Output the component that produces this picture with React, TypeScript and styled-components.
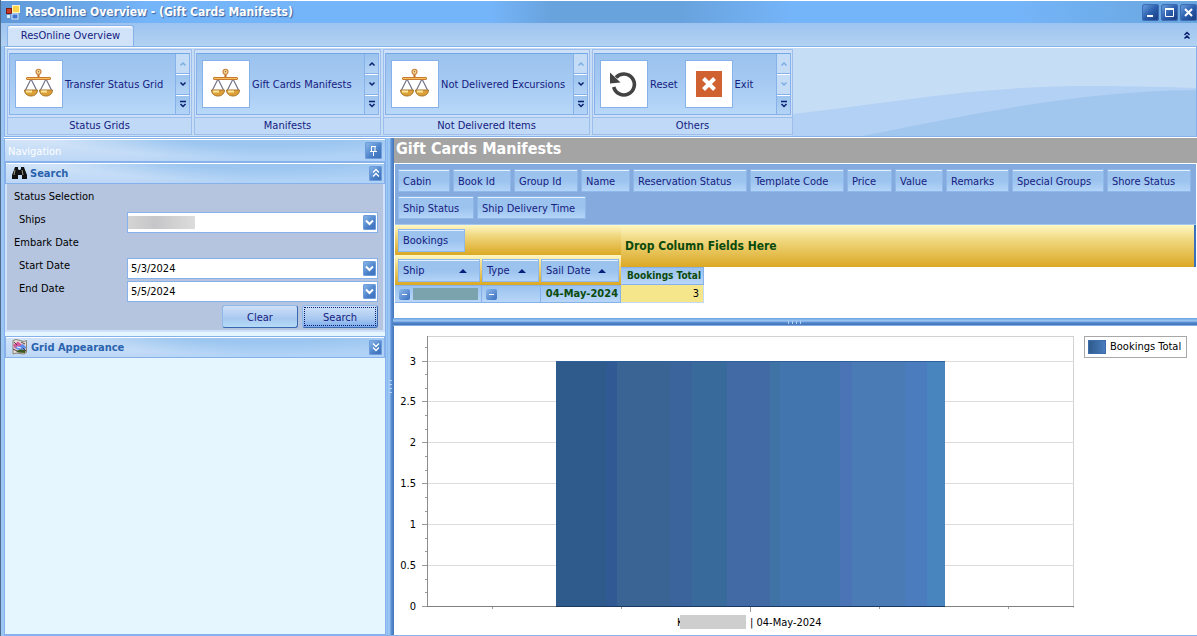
import React, { useId, useState } from "react";
import styled, { createGlobalStyle, css } from "styled-components";

const INK = "#15207f";
const LINE = "#86b1ea";

const GlobalStyle = createGlobalStyle`
  *, *::before, *::after { box-sizing: border-box; }
  html, body, #root { height: 100%; }
  body {
    margin: 0;
    font: 11px/14px "DejaVu Sans Condensed", "DejaVu Sans", sans-serif;
    color: #000;
    background: #fff;
  }
  button, input, select { font: inherit; color: inherit; margin: 0; }
  button { padding: 0; border: 0; background: none; cursor: pointer; }
  h1, h2 { margin: 0; }
`;

const Window = styled.div`
  min-height: 100%;
  display: flex;
  flex-direction: column;
  border-left: 1px solid #4f6b8c;
  background: #9cc6f4;
  overflow: hidden;
`;

/* ---------- title bar ---------- */

const TitleBar = styled.header`
  height: 23px;
  display: flex;
  align-items: center;
  gap: 4px;
  padding-left: 5px;
  border-top: 1px solid #fff;
  background: linear-gradient(90deg, #5f98d8 0, #6aa5e4 6%, #74b4f8 12%, #74b4f8 41%, #69a3de 46%, #69a3de 57%, #74b4f8 66%, #74b4f8 85%, #69a6de 100%);
`;

const WindowTitle = styled.h1`
  flex: 1;
  font-size: 12px;
  line-height: 20px;
  color: #fff;
  text-shadow: 1px 1px 1px #3a62a0;
`;

const WindowButtons = styled.div`
  display: flex;
  gap: 2px;
`;

const WindowButton = styled.button`
  width: 17px;
  height: 17px;
  display: grid;
  place-items: center;
  border-radius: 3px;
  background: linear-gradient(135deg, #6fa6e4, #2c5fae 50%, #16367c);
  box-shadow: inset 0 0 0 1px #3d6cb4;
`;

/* ---------- ribbon ---------- */

const TabStrip = styled.nav`
  height: 23px;
  display: flex;
  align-items: flex-end;
  justify-content: space-between;
  padding-left: 6px;
  background: linear-gradient(#9dc3f0, #b2d2f2);
`;

const Tab = styled.button`
  height: 21px;
  width: 127px;
  color: ${INK};
  border: 1px solid ${LINE};
  border-bottom: 0;
  border-radius: 3px 3px 0 0;
  background: linear-gradient(#fff 0, #cfe2f8 3px, #d2e3f8);
`;

const CollapseButton = styled.button`
  width: 20px;
  height: 22px;
  display: grid;
  place-items: center;
  color: #0a1f6e;
`;

const RibbonBody = styled.div`
  position: relative;
  height: 91px;
  display: flex;
  gap: 2px;
  margin-left: 3px;
  padding: 2px;
  border: 1px solid ${LINE};
  box-shadow: inset 0 1px #fff;
  background: #c6ddf6;
`;

const RibbonWave = styled.svg`
  position: absolute;
  right: 0;
  top: 1px;
  width: 404px;
  height: 88px;
`;

const Group = styled.section<{ $width: number }>`
  position: relative;
  width: ${(p) => p.$width}px;
  height: 86px;
  display: flex;
  flex-direction: column;
  border: 1px solid #9dbdec;
  background: #cde0f8;
`;

const Gallery = styled.div`
  height: 65px;
  display: flex;
  margin: 3px 1px 2px;
  border: 1px solid ${LINE};
  border-top-color: #6fa8e8;
  background: linear-gradient(#9bc3ee, #a6caf2 50%, #b8d8f8);
`;

const GalleryItems = styled.div`
  flex: 1;
  display: flex;
  gap: 7px;
  padding: 6px 0 0 5px;
`;

const GalleryItem = styled.button`
  height: 48px;
  display: flex;
  align-items: center;
  gap: 2px;
  color: ${INK};
  white-space: nowrap;
`;

const ItemLabel = styled.span`
  padding-top: 2px;
`;

const IconTile = styled.span`
  width: 48px;
  height: 48px;
  display: grid;
  place-items: center;
  border: 1px solid ${LINE};
  background: #fff;
`;

const GalleryScroll = styled.div`
  width: 14px;
  display: flex;
  flex-direction: column;
  border-left: 1px solid ${LINE};
`;

const ScrollButton = styled.button`
  flex: 1;
  display: grid;
  place-items: center;
  color: #0a1f6e;
  background: linear-gradient(#9bc3ee, #b4d4f6);
  & + & { border-top: 1px solid ${LINE}; box-shadow: inset 0 1px #fff; }
  &:disabled { color: #7cace4; background: #c4dcf6; }
`;

const GroupCaption = styled.div`
  flex: 1;
  border-top: 1px solid #9dbdec;
  background: #bfd9f6;
  color: ${INK};
  text-align: center;
  line-height: 16px;
`;

/* ---------- side panel ---------- */

const Main = styled.main`
  flex: 1;
  display: flex;
  margin-left: 3px;
  border-top: 1px solid #fff;
  border-bottom: 1px solid ${LINE};
`;

const SidePanel = styled.aside`
  width: 382px;
  flex: none;
  display: flex;
  flex-direction: column;
  border: 1px solid ${LINE};
  background: #e6f6ff;
`;

const barFill = css`
  background:
    radial-gradient(ellipse 240px 24px at 68% -4px, #9cc6f0 40%, transparent 90%),
    linear-gradient(90deg, transparent 35%, #b0d2f6 65%),
    linear-gradient(#d2e4f8, #bcd7f6);
`;

const NavHeader = styled.div`
  height: 23px;
  display: flex;
  align-items: center;
  justify-content: space-between;
  padding: 0 3px;
  border-top: 1px solid #fff;
  border-bottom: 1px solid ${LINE};
  color: #fff;
  ${barFill}
  & > span { padding-top: 2px; }
`;

const SectionHeader = styled.h2`
  height: 22px;
  display: flex;
  align-items: center;
  gap: 3px;
  padding: 0 2px 0 6px;
  border: 1px solid ${LINE};
  box-shadow: inset 0 1px #fff;
  font-size: 11px;
  color: #2a62ae;
  ${barFill}
  & > span { flex: 1; padding-top: 2px; }
`;

const NavSection = styled.section`
  margin-bottom: 4px;
`;

const SmallButton = styled.button<{ $size?: number }>`
  width: ${(p) => p.$size ?? 13}px;
  height: ${(p) => (p.$size ? 17 : 15)}px;
  flex: none;
  display: grid;
  place-items: center;
  border-radius: 2px;
  background: linear-gradient(135deg, #8fbcec, #4a80c8 60%, #3a6cb8);
  box-shadow: inset 0 0 0 1px #6d9cdc;
`;

const Form = styled.form`
  padding: 3px 5px 2px 7px;
  border: 2px solid #cfe2fa;
  border-top: 0;
  background: #b5c5df;
`;

const FormHeading = styled.div`
  height: 23px;
  line-height: 20px;
`;

const FieldRow = styled.div`
  height: 23px;
  display: grid;
  grid-template-columns: 108px 1fr;
  padding-left: 5px;
  line-height: 20px;
`;

const FieldBox = styled.div`
  height: 21px;
  margin-top: 2px;
  display: flex;
  align-items: center;
  padding-right: 1px;
  border: 1px solid ${LINE};
  background: #fff;
`;

const TextInput = styled.input`
  flex: 1;
  min-width: 0;
  height: 19px;
  padding: 0 3px;
  border: 0;
  outline: 0;
  background: transparent;
`;

const ShipSelect = styled.select`
  flex: 1;
  min-width: 0;
  height: 19px;
  border: 0;
  outline: 0;
  appearance: none;
  background: transparent;
`;

const Masked = styled.span<{ $tone: "grey" | "teal" }>`
  display: inline-block;
  width: ${(p) => (p.$tone === "teal" ? 65 : 67)}px;
  height: ${(p) => (p.$tone === "teal" ? 12 : 13)}px;
  background: ${(p) => (p.$tone === "teal" ? "#7ba3ae" : "linear-gradient(90deg, #d4d4d4, #c6c6c8 40%, #dcdcdc)")};
`;

const FormActions = styled.div`
  display: flex;
  justify-content: flex-end;
  gap: 4px;
  margin-top: 3px;
`;

const PushButton = styled.button<{ $focused?: boolean }>`
  width: 76px;
  height: 23px;
  padding: 1px;
  color: ${INK};
  border: 1px solid;
  border-color: #8fb8ea #3a68b0 #3a68b0 #8fb8ea;
  border-radius: 3px;
  background: linear-gradient(#cfe1f8, #a8c8f0 60%, ${(p) => (p.$focused ? "#7cacec" : "#b6dcf8")});
  & > span {
    display: block;
    height: 19px;
    line-height: ${(p) => (p.$focused ? 19 : 21)}px;
    ${(p) => p.$focused && "border: 1px dotted #0a1f6e;"}
  }
`;

/* ---------- work area ---------- */

const SplitterV = styled.div`
  width: 7px;
  flex: none;
  margin-left: 1px;
  display: grid;
  place-items: center;
  background: linear-gradient(90deg, #7fb4f0, #a8d0f8 30%, #5c90d4 60%, #4474b8);
`;

const SplitterH = styled(SplitterV)`
  width: auto;
  height: 8px;
  margin: 0 0 0 -1px;
  background: linear-gradient(#6aa0e0, #9cc6f4 35%, #4f84cc 60%, #4474b8 80%, #9cc6f4);
`;

const Grip = styled.span<{ $vertical?: boolean }>`
  width: ${(p) => (p.$vertical ? 3 : 14)}px;
  height: ${(p) => (p.$vertical ? 14 : 3)}px;
  background: repeating-linear-gradient(${(p) => (p.$vertical ? "180deg" : "90deg")}, #b4d6fa 0 1px, transparent 1px 4px);
`;

const Work = styled.section`
  flex: 1;
  min-width: 0;
  display: flex;
  flex-direction: column;
  background: #fff;
`;

const WorkTitle = styled.h2`
  height: 25px;
  padding-left: 2px;
  font-size: 16px;
  line-height: 21px;
  color: #fff;
  background: #a4a4a4;
`;

const FieldArea = styled.div`
  min-height: 61px;
  display: flex;
  flex-wrap: wrap;
  align-content: flex-start;
  gap: 4px 3px;
  margin: 1px 1px 0;
  padding: 4px 2px 3px 3px;
  border-top: 1px solid #78a8e4;
  border-bottom: 1px solid #a4c8f0;
  background: #85abde;
`;

const Chip = styled.button<{ $width: number }>`
  width: ${(p) => p.$width}px;
  height: 23px;
  display: flex;
  align-items: center;
  justify-content: space-between;
  padding: 2px 12px 0 4px;
  border: 1px solid #8fb8ea;
  box-shadow: inset 0 1px #e4f0fc;
  color: ${INK};
  font-weight: normal;
  white-space: nowrap;
  background: linear-gradient(#9bc3ee 50%, #b4d4f8);
`;

const gold = "linear-gradient(#fff8c4, #f0d880 35%, #dba824)";

const Pivot = styled.table`
  width: calc(100% - 2px);
  margin-left: 1px;
  table-layout: fixed;
  border-collapse: separate;
  border-spacing: 0;
  th, td { padding: 0; text-align: left; }
`;

const PivotRow = styled.tr<{ $height: number }>`
  height: ${(p) => p.$height}px;
`;

const GoldCell = styled.th`
  vertical-align: middle;
  background: ${gold};
`;

const ChipRow = styled.div`
  display: flex;
  gap: 2px;
  padding-left: 3px;
`;

const DropHint = styled.th`
  color: #0b4a0b;
  font-size: 12px;
  vertical-align: middle;
  border-right: 2px solid #3c70bc;
  background: ${gold};
  & > span { padding-left: 4px; }
`;

const HeadCell = styled.th`
  border: 1px solid ${LINE};
  border-width: 1px 1px 1px 0;
  color: #0b4a0b;
  background: linear-gradient(#9bc3ee, #b8d6f8);
  line-height: 14px;
  white-space: nowrap;
  && { text-align: right; padding-right: 2px; }
`;

const TotalHead = styled(HeadCell)`
  font-size: 10px;
`;

const RowHeader = styled(HeadCell)`
  && { text-align: left; padding-left: 4px; }
`;

const RowHeaderContent = styled.span`
  display: flex;
  align-items: center;
  gap: 3px;
`;

const ValueCell = styled.td`
  border-bottom: 1px solid #c4daf4;
  border-right: 1px solid #c4daf4;
  background: #f5e68c;
  && { text-align: right; padding-right: 4px; }
`;

const Expander = styled.button`
  width: 11px;
  height: 11px;
  flex: none;
  display: grid;
  place-items: center;
  border-radius: 2px;
  background: linear-gradient(135deg, #8cb8ec, #3c70c0);
`;

const GridSpace = styled.div`
  height: 15px;
`;

const ChartArea = styled.div`
  flex: 1;
  display: flex;
  align-items: flex-start;
  gap: 10px;
  padding-right: 10px;
`;

const ChartSvg = styled.svg`
  flex: 1;
  min-width: 0;
  display: block;
`;

const Legend = styled.div`
  flex: none;
  width: 103px;
  height: 22px;
  margin-top: 10px;
  display: flex;
  align-items: center;
  gap: 4px;
  padding: 0 3px;
  border: 1px solid #a8a8a8;
  line-height: 20px;
  white-space: nowrap;
`;

const Swatch = styled.span`
  width: 18px;
  height: 14px;
  background: linear-gradient(90deg, #2f5b8c, #4a7cbe);
  border: 1px solid #3c6cac;
`;

/* ---------- drawings ---------- */

const AppIcon = () => (
  <svg width="15" height="15" viewBox="0 0 15 15" aria-hidden="true">
    <rect x="0.5" y="3.5" width="5" height="5" fill="#c63a26" stroke="#7c1c10" />
    <rect x="6.5" y="0.5" width="7" height="7" fill="#fbd24c" stroke="#fff6c8" />
    <rect x="6" y="9" width="6" height="5" fill="#3f74d0" stroke="#dce8fa" />
    <rect x="1" y="10" width="3" height="3" fill="#e4ecf8" />
  </svg>
);

const ScalesIcon = () => (
  <svg width="32" height="32" viewBox="0 0 32 32" fill="none" aria-hidden="true">
    <path d="M8 11 2.500 22M8 11l5.500 11M23 11l-5.500 11M23 11l5.500 11" stroke="#74748c" strokeWidth="1.2" />
    <path d="M15.500 6v4" stroke="#c46a1e" strokeWidth="2" />
    <circle cx="15.500" cy="3.800" r="2.500" fill="#fbe6a0" stroke="#c88444" strokeWidth="1.200" />
    <circle cx="15.500" cy="3.800" r="0.800" fill="#a85a24" />
    <rect x="3.500" y="9.500" width="24" height="2" rx="0.500" fill="#f8c060" stroke="#c87a2c" />
    <path d="M1.500 22h13c0 3.500-2.500 6-6.500 6s-6.500-2.500-6.500-6ZM16.500 22h13c0 3.500-2.500 6-6.500 6s-6.500-2.500-6.500-6Z" fill="#dca038" stroke="#a8742c" />
    <path d="M3 23.500h6M18 23.500h6" stroke="#fbe89c" strokeWidth="2" />
  </svg>
);

const ResetIcon = () => (
  <svg width="32" height="32" viewBox="0 0 32 32" fill="none" aria-hidden="true">
    <path d="M8 9.500A10.500 10.500 0 1 1 5.700 19" stroke="#434343" strokeWidth="3.600" />
    <path d="M2 4.500v11l10.500-1Z" fill="#434343" />
  </svg>
);

const ExitIcon = () => (
  <svg width="26" height="26" viewBox="0 0 26 26" aria-hidden="true">
    <rect width="26" height="26" fill="#cf6230" />
    <path d="m7.500 7.500 11 11m0-11-11 11" stroke="#fff" strokeWidth="4" />
  </svg>
);

const BinocularsIcon = () => (
  <svg width="15" height="13" viewBox="0 0 15 13" aria-hidden="true">
    <path d="M3 0h3v2l1 1h1l1-1V0h3l1 3 2 5v4h-5V8H6v4H0V8l2-5Z" fill="#111" />
    <path d="M3 3 2 8M10 3l1 5" stroke="#999a78" />
  </svg>
);

const AppearanceIcon = () => (
  <svg width="16" height="16" viewBox="0 0 16 16" aria-hidden="true">
    <path d="M1 1.500 4 .5l8 2 2.500-1v12L12 15l-8-1-3 1Z" fill="#e4e0d8" stroke="#8a8478" />
    <path d="m1 6 5-3.500 5 4-2 2.500-6 .5Z" fill="#d85a9c" />
    <path d="m3 8 5-1 3-2 3 3-1 3-8-.5Z" fill="#5c8cec" />
    <path d="m4 12 4-1.500 6 .5-1 3-7-.5Z" fill="#3d5a24" />
    <path d="m2 3 3 3M1 10l4 2M9 3l4 2M11 9l3 3" stroke="#5a3a44" />
    <path d="m5 8 4 1" stroke="#fff" />
  </svg>
);

const Chevron = ({ up = false, double = false, barred = false }: { up?: boolean; double?: boolean; barred?: boolean }) => (
  <svg width="8" height="8" viewBox="0 0 8 8" fill="none" stroke="currentColor" strokeWidth="1.500" aria-hidden="true">
    {double ? (
      <path d={up ? "m1.500 4 2.500-2.500L6.500 4m-5 3.500L4 5l2.500 2.500" : "M1.500.5 4 3 6.500.5m-5 3.500L4 6.500 6.500 4"} />
    ) : (
      <path d={up ? "M1.500 5.500 4 3l2.500 2.500" : barred ? "M1 1.500h6M1.500 4 4 6.500 6.500 4" : "M1.500 2.500 4 5l2.500-2.500"} />
    )}
  </svg>
);

const SectionChevron = ({ up = false }: { up?: boolean }) => (
  <svg width="8" height="10" viewBox="0 0 8 10" fill="none" stroke="#fff" strokeWidth="1.300" aria-hidden="true">
    <path d={up ? "m1 4.500 3-3 3 3m-6 4 3-3 3 3" : "m1 1.500 3 3 3-3m-6 4 3 3 3-3"} />
  </svg>
);

const DropArrow = () => (
  <svg width="9" height="7" viewBox="0 0 9 7" fill="none" stroke="#fff" strokeWidth="2" aria-hidden="true">
    <path d="m1 1.500 3.500 3.500L8 1.500" />
  </svg>
);

const SortArrow = () => (
  <svg width="8" height="4" viewBox="0 0 8 4" aria-hidden="true">
    <path d="M0 4 4 0l4 4Z" fill="#0a1f7c" />
  </svg>
);

const MinusIcon = () => (
  <svg width="7" height="7" viewBox="0 0 7 7" aria-hidden="true">
    <path d="M1 3.500h5" stroke="#fff" />
  </svg>
);

/* ---------- composed parts ---------- */

interface GroupData {
  caption: string;
  width: number;
  up: boolean;
  down: boolean;
  items: { label: string; icon: React.ReactNode }[];
}

const groups: GroupData[] = [
  { caption: "Status Grids", width: 185, up: false, down: true, items: [{ label: "Transfer Status Grid", icon: <ScalesIcon /> }] },
  { caption: "Manifests", width: 187, up: true, down: true, items: [{ label: "Gift Cards Manifests", icon: <ScalesIcon /> }] },
  { caption: "Not Delivered Items", width: 207, up: false, down: true, items: [{ label: "Not Delivered Excursions", icon: <ScalesIcon /> }] },
  {
    caption: "Others", width: 201, up: false, down: false,
    items: [{ label: "Reset", icon: <ResetIcon /> }, { label: "Exit", icon: <ExitIcon /> }],
  },
];

const RibbonGroup = ({ caption, width, up, down, items }: GroupData) => (
  <Group $width={width} aria-label={caption}>
    <Gallery>
      <GalleryItems>
        {items.map((item) => (
          <GalleryItem key={item.label}>
            <IconTile>{item.icon}</IconTile>
            <ItemLabel>{item.label}</ItemLabel>
          </GalleryItem>
        ))}
      </GalleryItems>
      <GalleryScroll>
        <ScrollButton disabled={!up} aria-label="Scroll up"><Chevron up /></ScrollButton>
        <ScrollButton disabled={!down} aria-label="Scroll down"><Chevron /></ScrollButton>
        <ScrollButton aria-label="Show all"><Chevron barred /></ScrollButton>
      </GalleryScroll>
    </Gallery>
    <GroupCaption>{caption}</GroupCaption>
  </Group>
);

const DateField = ({ label, initial }: { label: string; initial: string }) => {
  const id = useId();
  const [value, setValue] = useState(initial);
  return (
    <FieldRow>
      <label htmlFor={id}>{label}</label>
      <FieldBox>
        <TextInput id={id} value={value} onChange={(e) => setValue(e.target.value)} />
        <SmallButton type="button" aria-label={`Open ${label}`}><DropArrow /></SmallButton>
      </FieldBox>
    </FieldRow>
  );
};

const fields: [string, number][] = [
  ["Cabin", 52], ["Book Id", 58], ["Group Id", 64], ["Name", 49], ["Reservation Status", 114],
  ["Template Code", 94], ["Price", 45], ["Value", 48], ["Remarks", 63], ["Special Groups", 92],
  ["Shore Status", 84], ["Ship Status", 76], ["Ship Delivery Time", 109],
];

const rowFields: [string, number][] = [["Ship", 82], ["Type", 57], ["Sail Date", 78]];

const barBands: [number, number, string][] = [
  [162, 50, "#2f5b8c"], [212, 11, "#315a94"], [223, 53, "#3a6494"], [276, 22, "#3b649c"],
  [298, 35, "#386b9c"], [333, 43, "#426ba6"], [376, 10, "#4073a5"], [386, 60, "#4274ae"],
  [446, 12, "#4a74b5"], [458, 53, "#4a7bb5"], [511, 22, "#4a7cbe"], [533, 18, "#4884bd"],
];

const yTicks = [
  ["3", 35], ["2.5", 75], ["2", 116], ["1.5", 157], ["1", 198], ["0.5", 239], ["0", 280],
] as const;

const minorTicks = [21, 48, 62, 89, 103, 130, 144, 171, 185, 212, 225, 253, 266];

const BookingsChart = () => (
  <ChartSvg viewBox="0 0 680 308" role="img" aria-label="Bookings Total by ship and sail date">
    <g shapeRendering="crispEdges">
      <path d="M33 10h647M679 10v271" stroke="#d2d2d2" fill="none" transform="translate(0 .5)" />
      {yTicks.map(([label, y]) => (
        <React.Fragment key={label}>
          <rect x="34" y={y} width="646" height="1" fill="#dcdcdc" />
          <rect x="28" y={y} width="5" height="1" fill="#9a9a9a" />
        </React.Fragment>
      ))}
      {minorTicks.map((y) => <rect key={y} x="31" y={y} width="2" height="1" fill="#9a9a9a" />)}
      {barBands.map(([x, w, fill]) => <rect key={x} x={x} y="35" width={w} height="245" fill={fill} />)}
      <rect x="162" y="35" width="389" height="1" fill="#2f5f9c" />
      <rect x="33" y="10" width="1" height="271" fill="#8c8c8c" />
      <rect x="33" y="280" width="647" height="1" fill="#808080" />
      <rect x="162" y="280" width="389" height="1" fill="#1c3860" />
      {[98, 227, 485, 614].map((x) => <rect key={x} x={x} y="281" width="1" height="2" fill="#9a9a9a" />)}
      <rect x="356" y="281" width="1" height="5" fill="#9a9a9a" />
    </g>
    {yTicks.map(([label, y]) => <text key={label} x="22" y={y + 4} textAnchor="end">{label}</text>)}
    <text x="283" y="300">K</text>
    <rect x="286" y="289" width="66" height="14" fill="#cecece" />
    <text x="356" y="300">| 04-May-2024</text>
  </ChartSvg>
);

export default function App() {
  const shipsId = useId();
  return (
    <>
      <GlobalStyle />
      <Window>
        <TitleBar>
          <AppIcon />
          <WindowTitle>ResOnline Overview - (Gift Cards Manifests)</WindowTitle>
          <WindowButtons>
            <WindowButton aria-label="Minimize">
              <svg width="11" height="11"><path d="M2 9h6" stroke="#fff" strokeWidth="2" /></svg>
            </WindowButton>
            <WindowButton aria-label="Maximize">
              <svg width="11" height="11"><path d="M1.500 1v8.500h8V1M1 2h9" fill="none" stroke="#fff" strokeWidth="1" /><path d="M1 2h9" stroke="#fff" strokeWidth="2" /></svg>
            </WindowButton>
            <WindowButton aria-label="Close">
              <svg width="11" height="11"><path d="m2 2 7 7m0-7L2 9" stroke="#fff" strokeWidth="2" /></svg>
            </WindowButton>
          </WindowButtons>
        </TitleBar>

        <TabStrip>
          <Tab>ResOnline Overview</Tab>
          <CollapseButton aria-label="Collapse ribbon"><Chevron up double /></CollapseButton>
        </TabStrip>

        <RibbonBody>
          <RibbonWave viewBox="0 0 404 88" aria-hidden="true">
            <path d="M0 66C120 52 180 39 290 38c50 0 90 1 114 2v48H0Z" fill="#b3d1f4" />
            <path d="M70 88C190 64 290 43 404 42v46Z" fill="#a2c7ee" />
          </RibbonWave>
          {groups.map((g) => <RibbonGroup key={g.caption} {...g} />)}
        </RibbonBody>

        <Main>
          <SidePanel>
            <NavHeader>
              <span>Navigation</span>
              <SmallButton $size={17} aria-label="Pin panel">
                <svg width="9" height="10" fill="none" stroke="#fff"><path d="M2 .5h5M2.500 1v4.500M6 1v4.500M1 5.500h7M4.500 6v4" /></svg>
              </SmallButton>
            </NavHeader>
            <NavSection>
              <SectionHeader>
                <BinocularsIcon />
                <span>Search</span>
                <SmallButton aria-label="Collapse Search"><SectionChevron up /></SmallButton>
              </SectionHeader>
              <Form onSubmit={(e) => e.preventDefault()}>
                <FormHeading>Status Selection</FormHeading>
                <FieldRow>
                  <label htmlFor={shipsId}>Ships</label>
                  <FieldBox>
                    <Masked $tone="grey" />
                    <ShipSelect id={shipsId}><option value="" /></ShipSelect>
                    <SmallButton type="button" aria-label="Open Ships"><DropArrow /></SmallButton>
                  </FieldBox>
                </FieldRow>
                <FormHeading>Embark Date</FormHeading>
                <DateField label="Start Date" initial="5/3/2024" />
                <DateField label="End Date" initial="5/5/2024" />
                <FormActions>
                  <PushButton type="reset"><span>Clear</span></PushButton>
                  <PushButton type="submit" $focused><span>Search</span></PushButton>
                </FormActions>
              </Form>
            </NavSection>
            <SectionHeader>
              <AppearanceIcon />
              <span>Grid Appearance</span>
              <SmallButton aria-label="Expand Grid Appearance"><SectionChevron /></SmallButton>
            </SectionHeader>
          </SidePanel>

          <SplitterV><Grip $vertical /></SplitterV>

          <Work>
            <WorkTitle>Gift Cards Manifests</WorkTitle>
            <FieldArea>
              {fields.map(([label, width]) => <Chip key={label} $width={width}>{label}</Chip>)}
            </FieldArea>
            <Pivot>
              <colgroup>
                <col width="87" /><col width="59" /><col width="80" /><col width="83" /><col />
              </colgroup>
              <tbody>
                <PivotRow $height={30}>
                  <GoldCell colSpan={3}>
                    <ChipRow><Chip $width={67}>Bookings</Chip></ChipRow>
                  </GoldCell>
                  <DropHint colSpan={2} rowSpan={2}><span>Drop Column Fields Here</span></DropHint>
                </PivotRow>
                <PivotRow $height={12}>
                  <GoldCell colSpan={3} rowSpan={2}>
                    <ChipRow>
                      {rowFields.map(([label, width]) => (
                        <Chip key={label} $width={width}>{label}<SortArrow /></Chip>
                      ))}
                    </ChipRow>
                  </GoldCell>
                </PivotRow>
                <PivotRow $height={18}>
                  <TotalHead>Bookings Total</TotalHead>
                  <td />
                </PivotRow>
                <PivotRow $height={18}>
                  <RowHeader>
                    <RowHeaderContent>
                      <Expander aria-label="Collapse ship"><MinusIcon /></Expander>
                      <Masked $tone="teal" />
                    </RowHeaderContent>
                  </RowHeader>
                  <RowHeader>
                    <RowHeaderContent>
                      <Expander aria-label="Collapse type"><MinusIcon /></Expander>
                    </RowHeaderContent>
                  </RowHeader>
                  <HeadCell>04-May-2024</HeadCell>
                  <ValueCell>3</ValueCell>
                  <td />
                </PivotRow>
              </tbody>
            </Pivot>
            <GridSpace />
            <SplitterH><Grip /></SplitterH>
            <ChartArea>
              <BookingsChart />
              <Legend><Swatch />Bookings Total</Legend>
            </ChartArea>
          </Work>
        </Main>
      </Window>
    </>
  );
}
